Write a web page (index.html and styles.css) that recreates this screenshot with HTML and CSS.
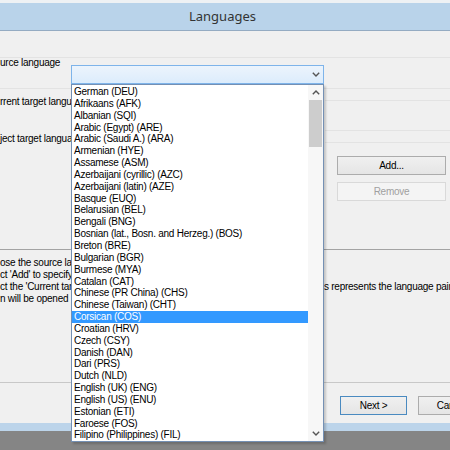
FILE: index.html
```html
<!doctype html>
<html>
<head>
    <meta charset="UTF-8">
    <title>Languages</title>
    <link rel="stylesheet" href="styles.css">
</head>
<body>
    <div class="window">
        <div class="top-strip"></div>
        <div class="titlebar">Languages</div>

        <div class="dialog">
            <div class="lang-section">
                <div class="field-source">
                    <p class="field-label">urce language</p>
                    <div class="combo">
                        <svg class="chevron" width="8" height="5" viewBox="0 0 8 5"><polyline points="0.8,0.8 4,4 7.2,0.8" /></svg>
                    </div>
                </div>

                <div class="field-pair">
                    <div class="labels">
                        <p class="label-current">rrent target language</p>
                        <p class="label-project">ject target language</p>
                    </div>
                    <div class="side">
                        <div class="rule-box"></div>
                        <div class="rule-line"></div>
                        <button class="btn btn-add">Add...</button>
                        <button class="btn btn-remove" disabled>Remove</button>
                    </div>
                </div>
            </div>

            <div class="notes">
                <p><span class="note-left">ose the source language</span></p>
                <p><span class="note-left">ct 'Add' to specify</span></p>
                <p><span class="note-left">ct the 'Current target</span><span class="note-right">s represents the language pair</span></p>
                <p><span class="note-left">n will be opened</span></p>
            </div>

            <div class="actions">
                <button class="btn btn-next">Next &gt;</button>
                <button class="btn btn-cancel">Cancel</button>
            </div>

            <!-- open dropdown of the source language combo -->
            <div class="dropdown">
                <ul class="options">
                    <li>German (DEU)</li>
                    <li>Afrikaans (AFK)</li>
                    <li>Albanian (SQI)</li>
                    <li>Arabic (Egypt) (ARE)</li>
                    <li>Arabic (Saudi A.) (ARA)</li>
                    <li>Armenian (HYE)</li>
                    <li>Assamese (ASM)</li>
                    <li>Azerbaijani (cyrillic) (AZC)</li>
                    <li>Azerbaijani (latin) (AZE)</li>
                    <li>Basque (EUQ)</li>
                    <li>Belarusian (BEL)</li>
                    <li>Bengali (BNG)</li>
                    <li>Bosnian (lat., Bosn. and Herzeg.) (BOS)</li>
                    <li>Breton (BRE)</li>
                    <li>Bulgarian (BGR)</li>
                    <li>Burmese (MYA)</li>
                    <li>Catalan (CAT)</li>
                    <li>Chinese (PR China) (CHS)</li>
                    <li>Chinese (Taiwan) (CHT)</li>
                    <li class="selected">Corsican (COS)</li>
                    <li>Croatian (HRV)</li>
                    <li>Czech (CSY)</li>
                    <li>Danish (DAN)</li>
                    <li>Dari (PRS)</li>
                    <li>Dutch (NLD)</li>
                    <li>English (UK) (ENG)</li>
                    <li>English (US) (ENU)</li>
                    <li>Estonian (ETI)</li>
                    <li>Faroese (FOS)</li>
                    <li>Filipino (Philippines) (FIL)</li>
                </ul>
                <div class="scrollbar">
                    <div class="arrow">
                        <svg width="8" height="5" viewBox="0 0 8 5"><polyline points="0.8,4.2 4,1 7.2,4.2" /></svg>
                    </div>
                    <div class="thumb"></div>
                    <div class="track"></div>
                    <div class="arrow">
                        <svg width="8" height="5" viewBox="0 0 8 5"><polyline points="0.8,0.8 4,4 7.2,0.8" /></svg>
                    </div>
                </div>
            </div>
        </div>

        <div class="frame-bottom"></div>
    </div>
</body>
</html>
```

FILE: styles.css
```css
body {
    margin: 0;
    width: 450px;
    height: 450px;
    overflow: hidden;
    background-color: #858585;
    font-family: "Liberation Sans", Arial, sans-serif;
    font-size: 10px;
    letter-spacing: -0.25px;
    color: #000;
}

p {
    margin: 0;
}

.top-strip {
    height: 3px;
    background-color: #eef1f4;
}

.titlebar {
    height: 27px;
    line-height: 27px;
    background-color: #b9d3ea;
    border-bottom: 1px solid #94abc2;
    text-align: center;
    padding-right: 5px;
    font-family: "Noto Sans", sans-serif;
    font-size: 13px;
    letter-spacing: 0;
    color: #333;
}

.dialog {
    position: relative;
    height: 392px;
    background-color: #f0f0f0;
}

/* language pickers */
.lang-section {
    box-sizing: border-box;
    height: 219px;
    border-bottom: 1px solid #a3a3a3;
    padding-top: 26px;
}

.field-source {
    border-top: 1px solid #e3e3e3;
}

.field-label {
    height: 7px;
    line-height: 9px;
    white-space: nowrap;
}

.combo {
    box-sizing: border-box;
    margin-left: 71px;
    width: 253px;
    height: 19px;
    border: 1px solid #7eb4ea;
    background: linear-gradient(#ecf4fc, #dcecfc);
    display: flex;
    justify-content: flex-end;
    align-items: center;
    padding-right: 3px;
}

.chevron polyline,
.arrow polyline {
    fill: none;
    stroke: #555;
    stroke-width: 1.4;
}

.field-pair {
    margin-top: 4px;
    border-top: 1px solid #e3e3e3;
    display: flex;
}

.labels {
    width: 71px;
    overflow: hidden;
    white-space: nowrap;
    line-height: 10px;
}

.label-current {
    padding-top: 8px;
}

.label-project {
    margin-top: 27px;
}

.side {
    margin-left: auto;
    width: 125px;
    display: flex;
    flex-direction: column;
}

.rule-box {
    margin-top: 11px;
    height: 29px;
    border-top: 1px solid #e3e3e3;
    border-bottom: 1px solid #e3e3e3;
}

.rule-line {
    margin-top: 11px;
    border-top: 1px solid #e3e3e3;
}

.btn {
    box-sizing: border-box;
    height: 19px;
    padding: 0;
    border: 1px solid #acacac;
    background: linear-gradient(#f0f0f0, #e5e5e5);
    font-family: "Liberation Sans", Arial, sans-serif;
    font-size: 10px;
    letter-spacing: -0.25px;
    color: #000;
}

.btn-add {
    margin: 13px 0 0 12px;
    width: 109px;
}

.btn-remove {
    margin: 7px 0 0 12px;
    width: 109px;
    border-color: #d9d9d9;
    background: #f4f4f4;
    color: #a0a0a0;
}

/* help text, partly hidden behind the dropdown */
.notes {
    box-sizing: border-box;
    height: 133px;
    border-bottom: 1px solid #c8c8c8;
    padding-top: 7px;
    line-height: 12px;
    white-space: nowrap;
    overflow: hidden;
}

.notes p {
    display: flex;
}

.note-left {
    width: 71px;
    overflow: hidden;
    flex-shrink: 0;
}

.note-right {
    margin-left: 253px;
    flex-shrink: 0;
}

.actions {
    height: 40px;
    box-sizing: border-box;
    padding: 13px 0 0 340px;
    display: flex;
    gap: 11px;
}

.btn-next,
.btn-cancel {
    width: 67px;
    flex-shrink: 0;
}

.btn-next {
    border-color: #4a8ac0;
}

.frame-bottom {
    height: 8px;
    background-color: #bcd4ea;
}

/* dropdown popup */
.dropdown {
    position: absolute;
    left: 71px;
    top: 53px;
    box-sizing: border-box;
    width: 253px;
    height: 358px;
    border: 1px solid #7490b4;
    background-color: #fff;
    box-shadow: 2px 2px 2px rgba(0, 0, 0, 0.18);
    display: flex;
    z-index: 2;
}

.options {
    list-style: none;
    margin: 0;
    padding: 1px 0 0 0;
    flex: 1;
}

.options li {
    height: 11.85px;
    line-height: 11.85px;
    padding-left: 2px;
    white-space: nowrap;
    overflow: hidden;
}

.options li.selected {
    background-color: #3399ff;
    color: #fff;
}

.scrollbar {
    width: 15px;
    background-color: #f7f7f7;
    display: flex;
    flex-direction: column;
}

.arrow {
    height: 15px;
    display: flex;
    justify-content: center;
    align-items: center;
}

.thumb {
    height: 47px;
    margin: 0 1px;
    background-color: #cdcdcd;
}

.track {
    flex: 1;
}
```
